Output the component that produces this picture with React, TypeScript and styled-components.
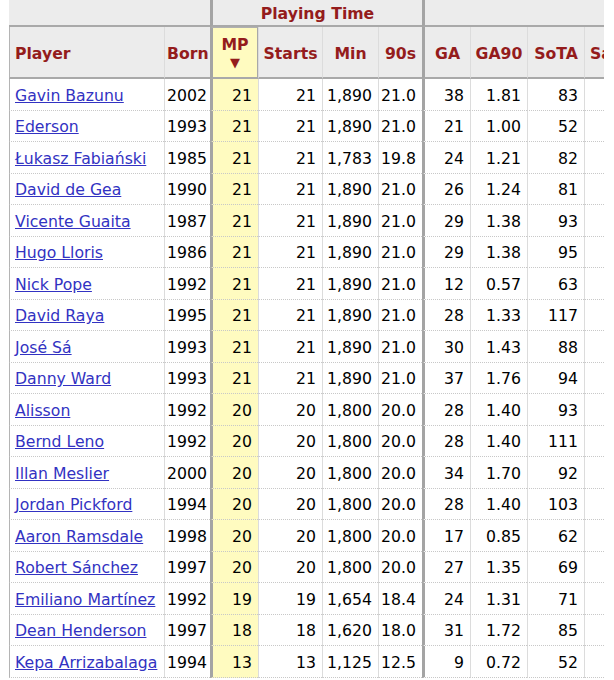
import { createGlobalStyle, styled } from "styled-components";

const GlobalStyle = createGlobalStyle`
  html, body {
    margin: 0;
    padding: 0;
    background: #fff;
    overflow: hidden;
  }
  body {
    font-family: "DejaVu Sans", Verdana, sans-serif;
  }
`;

type Align = "left" | "center" | "right";

const Frame = styled.div`
  width: 595px;
  margin-left: 9px;
  overflow: hidden;
`;

const StatsTable = styled.table`
  width: 635px;
  table-layout: fixed;
  border-collapse: separate;
  border-spacing: 0;
  font-size: 15.7px;
  color: #000;
`;

const Col = styled.col<{ $w: number }>`
  width: ${(p) => p.$w}px;
`;

const OverCell = styled.th<{ $thick?: boolean; $first?: boolean }>`
  box-sizing: border-box;
  height: 27px;
  padding: 1px 0 0;
  background: #ececec;
  border-bottom: 2px solid #a9a9a9;
  border-left: ${(p) => (p.$thick ? "3px solid #a4a4a4" : "none")};
  box-shadow: ${(p) => (p.$first ? "-9px 0 0 #ececec" : "none")};
  color: #941c1c;
  font-weight: bold;
  text-align: center;
`;

const HeadCell = styled.th<{ $align?: Align; $thick?: boolean; $sorted?: boolean; $edge?: boolean }>`
  box-sizing: border-box;
  height: 52px;
  padding: ${(p) => (p.$sorted ? "3px 2px 0" : p.$align === "left" ? "4px 0 0 5px" : "4px 2px 0")};
  background: ${(p) => (p.$sorted ? "#fffbc0" : "#ececec")};
  border-bottom: 2px solid #a9a9a9;
  border-left: ${(p) =>
    p.$thick ? "3px solid #a4a4a4" : p.$edge ? "1px solid #b4b4b4" : "1px solid #dcdcdc"};
  border-right: ${(p) => (p.$sorted ? "1px solid #a8a8a8" : "none")};
  border-top: ${(p) => (p.$sorted ? "1px solid #b0b0b0" : "none")};
  color: #941c1c;
  font-weight: bold;
  text-align: ${(p) => p.$align ?? "center"};
  line-height: 18px;
  white-space: nowrap;
  overflow: hidden;
`;

const SortArrow = styled.span`
  display: block;
  font-size: 13px;
  line-height: 18px;
`;

const Cell = styled.td<{ $align?: Align; $thick?: boolean; $sorted?: boolean; $edge?: boolean }>`
  box-sizing: border-box;
  height: 31.5px;
  padding: ${(p) =>
    p.$align === "left" ? "2px 0 0 5px" : p.$align === "center" ? "2px 0 0 2px" : "2px 6px 0 0"};
  background: ${(p) => (p.$sorted ? "#fffbc0" : "#fff")};
  border-bottom: 1px dotted #c8c8c8;
  border-left: ${(p) =>
    p.$thick ? "3px solid #a4a4a4" : p.$edge ? "1px solid #b4b4b4" : "1px solid #dcdcdc"};
  text-align: ${(p) => (p.$align === "center" ? "left" : p.$align ?? "right")};
  white-space: nowrap;
  overflow: hidden;
`;

const PlayerLink = styled.a`
  color: #3232c2;
  text-decoration: underline;
  cursor: pointer;
`;

type Row = [string, string, number, number, string, string, number, string, number];

const rows: Row[] = [
  ["Gavin Bazunu", "2002", 21, 21, "1,890", "21.0", 38, "1.81", 83],
  ["Ederson", "1993", 21, 21, "1,890", "21.0", 21, "1.00", 52],
  ["Łukasz Fabiański", "1985", 21, 21, "1,783", "19.8", 24, "1.21", 82],
  ["David de Gea", "1990", 21, 21, "1,890", "21.0", 26, "1.24", 81],
  ["Vicente Guaita", "1987", 21, 21, "1,890", "21.0", 29, "1.38", 93],
  ["Hugo Lloris", "1986", 21, 21, "1,890", "21.0", 29, "1.38", 95],
  ["Nick Pope", "1992", 21, 21, "1,890", "21.0", 12, "0.57", 63],
  ["David Raya", "1995", 21, 21, "1,890", "21.0", 28, "1.33", 117],
  ["José Sá", "1993", 21, 21, "1,890", "21.0", 30, "1.43", 88],
  ["Danny Ward", "1993", 21, 21, "1,890", "21.0", 37, "1.76", 94],
  ["Alisson", "1992", 20, 20, "1,800", "20.0", 28, "1.40", 93],
  ["Bernd Leno", "1992", 20, 20, "1,800", "20.0", 28, "1.40", 111],
  ["Illan Meslier", "2000", 20, 20, "1,800", "20.0", 34, "1.70", 92],
  ["Jordan Pickford", "1994", 20, 20, "1,800", "20.0", 28, "1.40", 103],
  ["Aaron Ramsdale", "1998", 20, 20, "1,800", "20.0", 17, "0.85", 62],
  ["Robert Sánchez", "1997", 20, 20, "1,800", "20.0", 27, "1.35", 69],
  ["Emiliano Martínez", "1992", 19, 19, "1,654", "18.4", 24, "1.31", 71],
  ["Dean Henderson", "1997", 18, 18, "1,620", "18.0", 31, "1.72", 85],
  ["Kepa Arrizabalaga", "1994", 13, 13, "1,125", "12.5", 9, "0.72", 52],
];

export default function App() {
  return (
    <>
      <GlobalStyle />
      <Frame>
        <StatsTable>
          <colgroup>
            <Col $w={155} />
            <Col $w={46} />
            <Col $w={48} />
            <Col $w={64} />
            <Col $w={56} />
            <Col $w={44} />
            <Col $w={48} />
            <Col $w={57} />
            <Col $w={57} />
            <Col $w={60} />
          </colgroup>
          <thead>
            <tr>
              <OverCell colSpan={2} $first />
              <OverCell colSpan={4} $thick>
                Playing Time
              </OverCell>
              <OverCell colSpan={4} $thick />
            </tr>
            <tr>
              <HeadCell $align="left" $edge>
                Player
              </HeadCell>
              <HeadCell>Born</HeadCell>
              <HeadCell $thick $sorted>
                MP
                <SortArrow>▼</SortArrow>
              </HeadCell>
              <HeadCell>Starts</HeadCell>
              <HeadCell>Min</HeadCell>
              <HeadCell>90s</HeadCell>
              <HeadCell $thick>GA</HeadCell>
              <HeadCell>GA90</HeadCell>
              <HeadCell>SoTA</HeadCell>
              <HeadCell $align="left">Saves</HeadCell>
            </tr>
          </thead>
          <tbody>
            {rows.map((r) => (
              <tr key={r[0]}>
                <Cell $align="left" $edge>
                  <PlayerLink>{r[0]}</PlayerLink>
                </Cell>
                <Cell $align="center">{r[1]}</Cell>
                <Cell $thick $sorted>
                  {r[2]}
                </Cell>
                <Cell>{r[3]}</Cell>
                <Cell>{r[4]}</Cell>
                <Cell>{r[5]}</Cell>
                <Cell $thick>{r[6]}</Cell>
                <Cell>{r[7]}</Cell>
                <Cell>{r[8]}</Cell>
                <Cell />
              </tr>
            ))}
          </tbody>
        </StatsTable>
      </Frame>
    </>
  );
}
